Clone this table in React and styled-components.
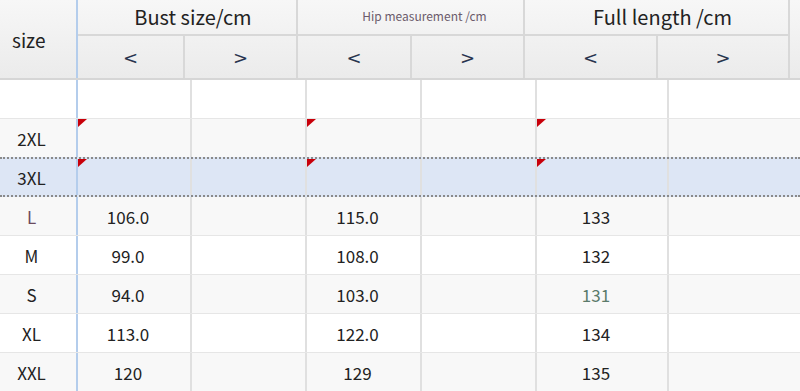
import React from "react";
import styled, { createGlobalStyle, css } from "styled-components";

const Global = createGlobalStyle`
  html, body { margin: 0; padding: 0; background: #fff; }
  body { font-family: "Noto Sans CJK SC", "Noto Sans", sans-serif; color: #222; overflow: hidden; }
`;

const Sheet = styled.div`
  width: 800px;
  height: 391px;
  overflow: hidden;
  position: relative;
`;

const Header = styled.div`
  display: grid;
  grid-template-columns: 76px 2px 107px 113px 114px 113px 133px 132px 10px;
  grid-template-rows: 36px 42px;
  height: 80px;
  border-bottom: 2px solid #d6d6d6;
  box-sizing: border-box;
  background: linear-gradient(#f7f7f7, #ebebeb);
`;

const SizeHead = styled.div`
  grid-row: 1 / span 2;
  grid-column: 1;
  display: flex;
  align-items: center;
  padding-left: 12px;
  font-size: 19px;
  color: #222;
`;

const BlueLine = styled.div`
  grid-row: 1 / span 2;
  grid-column: 2;
  background: #b4cdec;
`;

const GroupHead = styled.div`
  grid-row: 1;
  grid-column: ${(p) => p.$col} / span 2;
  display: flex;
  align-items: center;
  justify-content: center;
  border-right: 2px solid #d8d8d8;
  border-bottom: 2px solid #d8d8d8;
  font-size: ${(p) => (p.$small ? "12px" : "20px")};
  color: ${(p) => (p.$small ? "#6b5b6b" : "#222")};
  padding-bottom: ${(p) => (p.$small ? "3px" : "2px")};
  padding-left: ${(p) => (p.$small ? "28px" : "12px")};
`;

const TailHead = styled.div`
  grid-row: 1 / span 2;
  grid-column: 9;
`;

const Arrow = styled.div`
  grid-row: 2;
  display: flex;
  align-items: center;
  justify-content: center;
  border-right: 2px solid #d8d8d8;
  font-family: "DejaVu Sans", sans-serif;
  font-size: 18px;
  color: #28344e;
  padding-top: 1px;
`;

const Body = styled.div`
  display: flex;
  flex-direction: column;
`;

const Row = styled.div`
  display: grid;
  grid-template-columns: 76px 2px 114px 115px 115px 115px 132px 131px;
  height: 39px;
  box-sizing: border-box;
  background: ${(p) => (p.$sel ? "#dde6f5" : p.$alt ? "#f8f8f8" : "#fff")};
  border-bottom: 1px solid #e6e6e6;
  ${(p) =>
    p.$sel &&
    css`
      border-top: 2px dotted #8a8a8a;
      border-bottom: 2px dotted #8a8a8a;
      margin-top: -1px;
      height: 40px;
    `}
`;

const SizeCell = styled.div`
  display: flex;
  align-items: center;
  justify-content: center;
  padding-right: 13px;
  font-size: 17px;
  color: ${(p) => p.$color || "#222"};
`;

const Cell = styled.div`
  position: relative;
  display: flex;
  align-items: center;
  justify-content: center;
  padding-right: 12px;
  font-size: 17px;
  color: ${(p) => p.$color || "#222"};
  border-right: ${(p) => (p.$last ? "none" : "2px solid #e0e0e0")};
`;

const Flag = styled.span`
  position: absolute;
  top: 0;
  left: 0;
  width: 0;
  height: 0;
  border-top: 8px solid #c8000a;
  border-right: 9px solid transparent;
`;

const rows = [
  { size: "", vals: ["", "", "", ""] },
  { size: "2XL", vals: ["", "", "", ""], flag: true, alt: true },
  { size: "3XL", vals: ["", "", "", ""], flag: true, sel: true },
  { size: "L", vals: ["106.0", "115.0", "133"], alt: true, sizeColor: "#6b4b5e" },
  { size: "M", vals: ["99.0", "108.0", "132"] },
  { size: "S", vals: ["94.0", "103.0", "131"], alt: true, greenLen: true },
  { size: "XL", vals: ["113.0", "122.0", "134"] },
  { size: "XXL", vals: ["120", "129", "135"], alt: true },
];

export default function App() {
  return (
    <Sheet>
      <Global />
      <Header>
        <SizeHead>size</SizeHead>
        <BlueLine />
        <GroupHead $col={3}>Bust size/cm</GroupHead>
        <GroupHead $col={5} $small>Hip measurement /cm</GroupHead>
        <GroupHead $col={7}>Full length /cm</GroupHead>
        <TailHead />
        <Arrow style={{ gridColumn: 3 }}>&lt;</Arrow>
        <Arrow style={{ gridColumn: 4 }}>&gt;</Arrow>
        <Arrow style={{ gridColumn: 5 }}>&lt;</Arrow>
        <Arrow style={{ gridColumn: 6 }}>&gt;</Arrow>
        <Arrow style={{ gridColumn: 7 }}>&lt;</Arrow>
        <Arrow style={{ gridColumn: 8 }}>&gt;</Arrow>
      </Header>
      <Body>
        {rows.map((r, i) => (
          <Row key={i} $alt={r.alt} $sel={r.sel}>
            <SizeCell $color={r.sizeColor}>{r.size}</SizeCell>
            <BlueLine as="div" style={{ gridRow: "auto" }} />
            <Cell>{r.flag && <Flag />}{r.vals[0]}</Cell>
            <Cell />
            <Cell>{r.flag && <Flag />}{r.vals[1]}</Cell>
            <Cell />
            <Cell $color={r.greenLen ? "#5b7b6b" : undefined}>
              {r.flag && <Flag />}
              {r.vals[2]}
            </Cell>
            <Cell $last />
          </Row>
        ))}
      </Body>
    </Sheet>
  );
}
